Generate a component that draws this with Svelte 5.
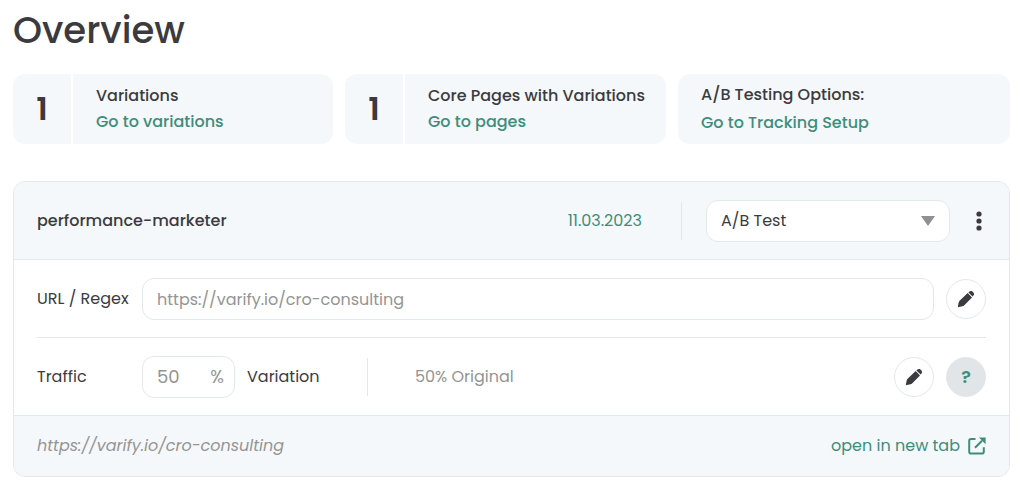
<script>
  let stats = [
    { count: 1, title: "Variations", link: "Go to variations" },
    { count: 1, title: "Core Pages with Variations", link: "Go to pages" },
  ];

  let url = "https://varify.io/cro-consulting";
  let traffic = 50;
  let type = "ab";
</script>

{#snippet pencil()}
  <svg class="pencil" viewBox="0 0 18 18" aria-hidden="true">
    <path d="M.8 17.200l.8-4.500Q1.800 11.600 2.600 10.800L10.700 3.100l4.300 4.300L7.300 15.200q-.8.800-1.900 1z" />
    <path d="M11.400 2.400l.8-.7q1.200-1.200 2.500-.6 1.500.7 2.200 2.100.6 1.300-.6 2.500l-.7.900z" />
  </svg>
{/snippet}

<main>
  <h1>Overview</h1>

  <section class="stats">
    {#each stats as stat}
      <div class="stat">
        <strong>{stat.count}</strong>
        <div class="info">
          <span>{stat.title}</span>
          <a href="#top">{stat.link}</a>
        </div>
      </div>
    {/each}
    <div class="stat">
      <div class="info options">
        <span>A/B Testing Options:</span>
        <a href="#tracking">Go to Tracking Setup</a>
      </div>
    </div>
  </section>

  <section class="panel">
    <header>
      <h2>performance-marketer</h2>
      <time datetime="2023-03-11">11.03.2023</time>
      <div class="type">
        <select aria-label="Test type" bind:value={type}>
          <option value="ab">A/B Test</option>
        </select>
        <svg class="arrow" viewBox="0 0 14 10" aria-hidden="true">
          <path d="M0 0h14L7 10z" />
        </svg>
      </div>
      <button class="more" aria-label="More">
        <svg viewBox="0 0 6 20" aria-hidden="true">
          <circle cx="3" cy="3" r="2.600" />
          <circle cx="3" cy="10" r="2.600" />
          <circle cx="3" cy="17" r="2.600" />
        </svg>
      </button>
    </header>

    <div class="rows">
      <div class="row">
        <label for="url">URL / Regex</label>
        <input id="url" class="field url" type="text" bind:value={url} readonly />
        <button class="round" aria-label="Edit URL">{@render pencil()}</button>
      </div>
      <div class="row">
        <label for="traffic">Traffic</label>
        <div class="field traffic">
          <input id="traffic" type="text" bind:value={traffic} readonly />
          <span>%</span>
        </div>
        <span class="variation">Variation</span>
        <span class="original">{100 - traffic}% Original</span>
        <button class="round" aria-label="Edit traffic">{@render pencil()}</button>
        <button class="round help">?</button>
      </div>
    </div>

    <footer>
      <em>{url}</em>
      <a href={url} target="_blank">
        open in new tab
        <svg viewBox="0 0 18 18" aria-hidden="true">
          <path class="line" d="M7.500 2H3Q1.200 2 1.200 3.800v11Q1.200 16.600 3 16.600h11q1.800 0 1.800-1.800v-4.500M7 10.800l7-7" />
          <path d="M11 .6h6.600v6.600z" />
        </svg>
      </a>
    </footer>
  </section>
</main>

<style>
  :global(body) {
    background: #fff;
  }

  main {
    padding: 8px 14px 16px 13px;
    font-family: Poppins, Inter, "Liberation Sans", sans-serif;
    font-size: 16px;
    line-height: 24px;
    color: #3b3b3f;
  }

  h1 {
    margin: 0 0 22px;
    font-size: 37px;
    line-height: 44px;
    font-weight: 500;
  }

  a {
    color: #3f8d7b;
    text-decoration: none;
  }

  button,
  input,
  select {
    font: inherit;
    color: inherit;
  }

  button {
    padding: 0;
    border: none;
    background: none;
    cursor: pointer;
  }

  .stats {
    display: grid;
    grid-template-columns: 320fr 321fr 332fr;
    gap: 12px;
    margin-bottom: 37px;
  }

  .stat {
    display: flex;
    gap: 2px;
    height: 70px;
    border-radius: 12px;
    overflow: hidden;
    font-weight: 500;
  }

  .stat strong {
    display: flex;
    align-items: center;
    justify-content: center;
    width: 58px;
    font-size: 32px;
    font-weight: 600;
    background: #f4f8fb;
  }

  .info {
    display: flex;
    flex: 1;
    flex-direction: column;
    justify-content: center;
    gap: 2px;
    padding-left: 23px;
    white-space: nowrap;
    background: #f4f8fb;
  }

  .options {
    gap: 4px;
  }

  .panel {
    border: 1px solid #e3e8eb;
    border-radius: 12px;
    overflow: hidden;
  }

  header {
    display: flex;
    align-items: center;
    padding: 18px 24px 17px 23px;
    background: #f4f8fb;
    border-bottom: 1px solid #e3e8eb;
  }

  h2 {
    flex: 1;
    margin: 0;
    font-size: 16px;
    font-weight: 500;
  }

  time {
    margin-right: 24px;
    padding: 7px 39px 7px 0;
    border-right: 1px solid #e3e8eb;
    color: #3f8d7b;
  }

  .type {
    position: relative;
    width: 244px;
    height: 42px;
  }

  select {
    width: 100%;
    height: 100%;
    padding: 0 14px;
    border: 1px solid #e3e8eb;
    border-radius: 12px;
    background: #fff;
    appearance: none;
  }

  .arrow {
    position: absolute;
    top: 16px;
    right: 15px;
    width: 14px;
    height: 10px;
    fill: #8f9093;
    pointer-events: none;
  }

  .more {
    display: flex;
    justify-content: center;
    width: 12px;
    margin-left: 23px;
  }

  .more svg {
    width: 6px;
    height: 20px;
    fill: #3b3b3f;
  }

  .rows {
    padding: 0 23px;
  }

  .row {
    display: flex;
    align-items: center;
    padding: 18px 0 17px;
  }

  .row + .row {
    border-top: 1px solid #e3e8eb;
  }

  label {
    width: 105px;
    white-space: nowrap;
  }

  .field {
    box-sizing: border-box;
    height: 42px;
    border: 1px solid #e3e8eb;
    border-radius: 12px;
    padding: 0 14px;
    color: #949494;
    background: #fff;
  }

  .url {
    flex: 1;
    min-width: 0;
  }

  .traffic {
    display: flex;
    align-items: center;
    justify-content: space-between;
    width: 93px;
    padding-right: 10px;
    font-size: 18px;
  }

  .traffic input {
    width: 36px;
    padding: 0;
    border: none;
    background: none;
  }

  .variation {
    width: 120px;
    margin-left: 12px;
    padding: 7px 0;
    border-right: 1px solid #e3e8eb;
  }

  .original {
    flex: 1;
    padding-left: 47px;
    color: #949494;
  }

  .round {
    box-sizing: border-box;
    display: flex;
    align-items: center;
    justify-content: center;
    width: 40px;
    height: 40px;
    margin-left: 12px;
    border: 1px solid #e3e8eb;
    border-radius: 50%;
  }

  .pencil {
    width: 18px;
    height: 18px;
    fill: #3b3b3f;
  }

  .help {
    background: #e1e5e8;
    color: #3f8d7b;
    font-size: 18px;
    font-weight: 600;
  }

  footer {
    display: flex;
    align-items: center;
    justify-content: space-between;
    padding: 18px 23px;
    background: #f4f8fb;
    border-top: 1px solid #e3e8eb;
  }

  em {
    color: #949494;
  }

  footer a {
    display: flex;
    align-items: center;
    gap: 8px;
  }

  footer svg {
    width: 18px;
    height: 18px;
    fill: #3f8d7b;
  }

  footer .line {
    fill: none;
    stroke: #3f8d7b;
    stroke-width: 2;
  }
</style>
